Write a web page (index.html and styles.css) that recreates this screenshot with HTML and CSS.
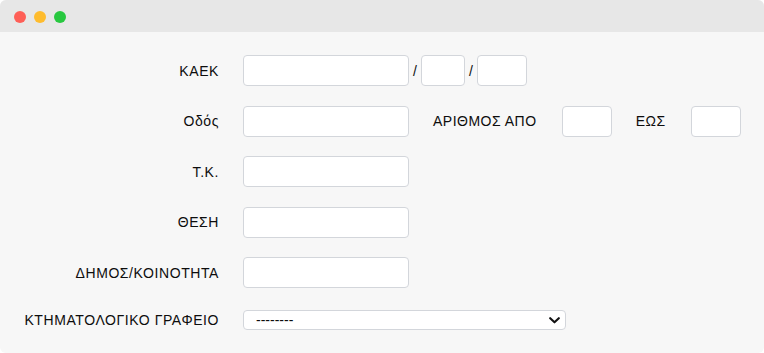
FILE: index.html
```html
<!DOCTYPE html>
<html lang="el">
<head>
    <meta charset="UTF-8">
    <meta name="viewport" content="width=device-width, initial-scale=1.0">
    <title>Αναζήτηση ακινήτου</title>
    <link rel="stylesheet" href="styles.css">
</head>
<body>

    <div class="window">
        <div class="titlebar">
            <span class="dot dot-red"></span>
            <span class="dot dot-yellow"></span>
            <span class="dot dot-green"></span>
        </div>

        <form class="search-form" id="searchForm">
            <div class="row">
                <label for="kaek">ΚΑΕΚ</label>
                <div class="fields">
                    <input type="text" id="kaek" name="kaek" class="input-wide">
                    <span class="sep">/</span>
                    <input type="text" id="kaek2" name="kaek2" class="input-xs">
                    <span class="sep">/</span>
                    <input type="text" id="kaek3" name="kaek3" class="input-small">
                </div>
            </div>

            <div class="row">
                <label for="odos">Οδός</label>
                <div class="fields">
                    <input type="text" id="odos" name="odos" class="input-wide">
                    <span class="inline-label">ΑΡΙΘΜΟΣ ΑΠΟ</span>
                    <input type="text" id="arithmos_apo" name="arithmos_apo" class="input-small">
                    <span class="inline-label">ΕΩΣ</span>
                    <input type="text" id="arithmos_eos" name="arithmos_eos" class="input-small">
                </div>
            </div>

            <div class="row">
                <label for="tk">Τ.Κ.</label>
                <div class="fields">
                    <input type="text" id="tk" name="tk" class="input-wide">
                </div>
            </div>

            <div class="row">
                <label for="thesi">ΘΕΣΗ</label>
                <div class="fields">
                    <input type="text" id="thesi" name="thesi" class="input-wide">
                </div>
            </div>

            <div class="row">
                <label for="dimos">ΔΗΜΟΣ/ΚΟΙΝΟΤΗΤΑ</label>
                <div class="fields">
                    <input type="text" id="dimos" name="dimos" class="input-wide">
                </div>
            </div>

            <div class="row row-select">
                <label for="grafeio">ΚΤΗΜΑΤΟΛΟΓΙΚΟ ΓΡΑΦΕΙΟ</label>
                <div class="select-wrap">
                    <select id="grafeio" name="grafeio">
                        <option value="">--------</option>
                    </select>
                    <!-- chevron drawn over the select -->
                    <svg class="chevron" width="11" height="7" viewBox="0 0 11 7">
                        <path d="M1.2 1.2 L5.5 5.3 L9.8 1.2" fill="none" stroke="#111" stroke-width="2.1" stroke-linecap="round" stroke-linejoin="round"/>
                    </svg>
                </div>
            </div>
        </form>
    </div>

</body>
</html>
```

FILE: styles.css
```css
html,
body {
    margin: 0;
    padding: 0;
    background-color: #ffffff;
}

body {
    font-family: "Liberation Sans", Arial, sans-serif;
    font-size: 14px;
    color: #0d0d0d;
}

.window {
    width: 764px;
    height: 353px;
    box-sizing: border-box;
    background-color: #f7f7f7;
    border-radius: 6px;
    overflow: hidden;
}

.titlebar {
    height: 32px;
    background-color: #e7e7e7;
    display: flex;
    align-items: center;
    gap: 8px;
    padding-left: 14px;
    padding-top: 1px;
    box-sizing: border-box;
}

.dot {
    width: 12px;
    height: 12px;
    border-radius: 50%;
}

.dot-red {
    background-color: #fe5f57;
}

.dot-yellow {
    background-color: #febc2e;
}

.dot-green {
    background-color: #28c840;
}

.search-form {
    padding: 23px 0 0 20px;
    display: flex;
    flex-direction: column;
    gap: 19.5px;
}

.row {
    display: flex;
    align-items: center;
    height: 31px;
}

.row label {
    width: 199px;
    margin-right: 24px;
    text-align: right;
    flex-shrink: 0;
    letter-spacing: 0.58px;
}

.row-select {
    height: 20px;
    margin-top: 2.5px;
}

.fields {
    display: flex;
    align-items: center;
}

input {
    height: 31px;
    box-sizing: border-box;
    border: 1px solid #d3d6db;
    border-radius: 4px;
    background-color: #ffffff;
    padding: 4px 8px;
    font-family: inherit;
    font-size: 14px;
}

.input-wide {
    width: 166px;
}

.input-xs {
    width: 44px;
}

.input-small {
    width: 50px;
}

.sep {
    margin: 0 4px;
}

.inline-label {
    margin: 0 25px 0 24px;
    letter-spacing: 0.5px;
}

.select-wrap {
    position: relative;
    width: 323px;
    height: 20px;
}

select {
    -webkit-appearance: none;
    appearance: none;
    width: 100%;
    height: 20px;
    box-sizing: border-box;
    border: 1px solid #d3d6db;
    border-radius: 4px;
    background-color: #ffffff;
    padding: 0 0 0 12px;
    font-family: inherit;
    font-size: 14px;
    color: #0d0d0d;
}

.chevron {
    position: absolute;
    right: 6px;
    top: 7px;
}
```
